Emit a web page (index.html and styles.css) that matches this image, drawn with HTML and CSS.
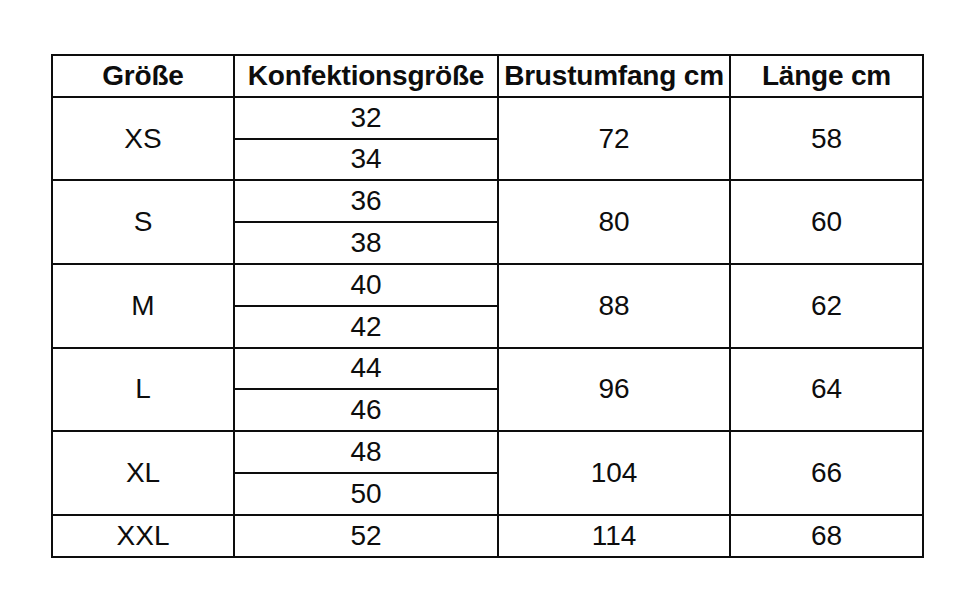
FILE: index.html
```html
<!DOCTYPE html>
<html lang="de">
<head>
<meta charset="utf-8">
<title>Größentabelle</title>
<link rel="stylesheet" href="styles.css">
</head>
<body>
<table class="size-table">
  <colgroup>
    <col class="c1"><col class="c2"><col class="c3"><col class="c4">
  </colgroup>
  <thead>
    <tr><th>Größe</th><th>Konfektionsgröße</th><th>Brustumfang cm</th><th>Länge cm</th></tr>
  </thead>
  <tbody>
    <tr><td rowspan="2">XS</td><td>32</td><td rowspan="2">72</td><td rowspan="2">58</td></tr>
    <tr><td>34</td></tr>
    <tr><td rowspan="2">S</td><td>36</td><td rowspan="2">80</td><td rowspan="2">60</td></tr>
    <tr><td>38</td></tr>
    <tr><td rowspan="2">M</td><td>40</td><td rowspan="2">88</td><td rowspan="2">62</td></tr>
    <tr><td>42</td></tr>
    <tr><td rowspan="2">L</td><td>44</td><td rowspan="2">96</td><td rowspan="2">64</td></tr>
    <tr><td>46</td></tr>
    <tr><td rowspan="2">XL</td><td>48</td><td rowspan="2">104</td><td rowspan="2">66</td></tr>
    <tr><td>50</td></tr>
    <tr><td>XXL</td><td>52</td><td>114</td><td>68</td></tr>
  </tbody>
</table>
</body>
</html>
```
FILE: styles.css
```css
html, body {
  margin: 0;
  background: #fff;
}
body {
  padding: 54px 0 0 51px;
  font-family: "Liberation Sans", Arial, sans-serif;
  color: #0d0d0d;
}
.size-table {
  border-collapse: collapse;
  table-layout: fixed;
  width: 871px;
}
.c1 { width: 182px; }
.c2 { width: 264px; }
.c3 { width: 232px; }
.c4 { width: 193px; }
.size-table th,
.size-table td {
  border: 2px solid #0d0d0d;
  padding: 0;
  text-align: center;
  vertical-align: middle;
  height: 39.8px;
  line-height: 1;
  white-space: nowrap;
  overflow: hidden;
}
.size-table th {
  font-weight: bold;
  font-size: 28px;
  letter-spacing: -0.2px;
}
.size-table td {
  font-size: 28px;
  font-weight: normal;
}
```
